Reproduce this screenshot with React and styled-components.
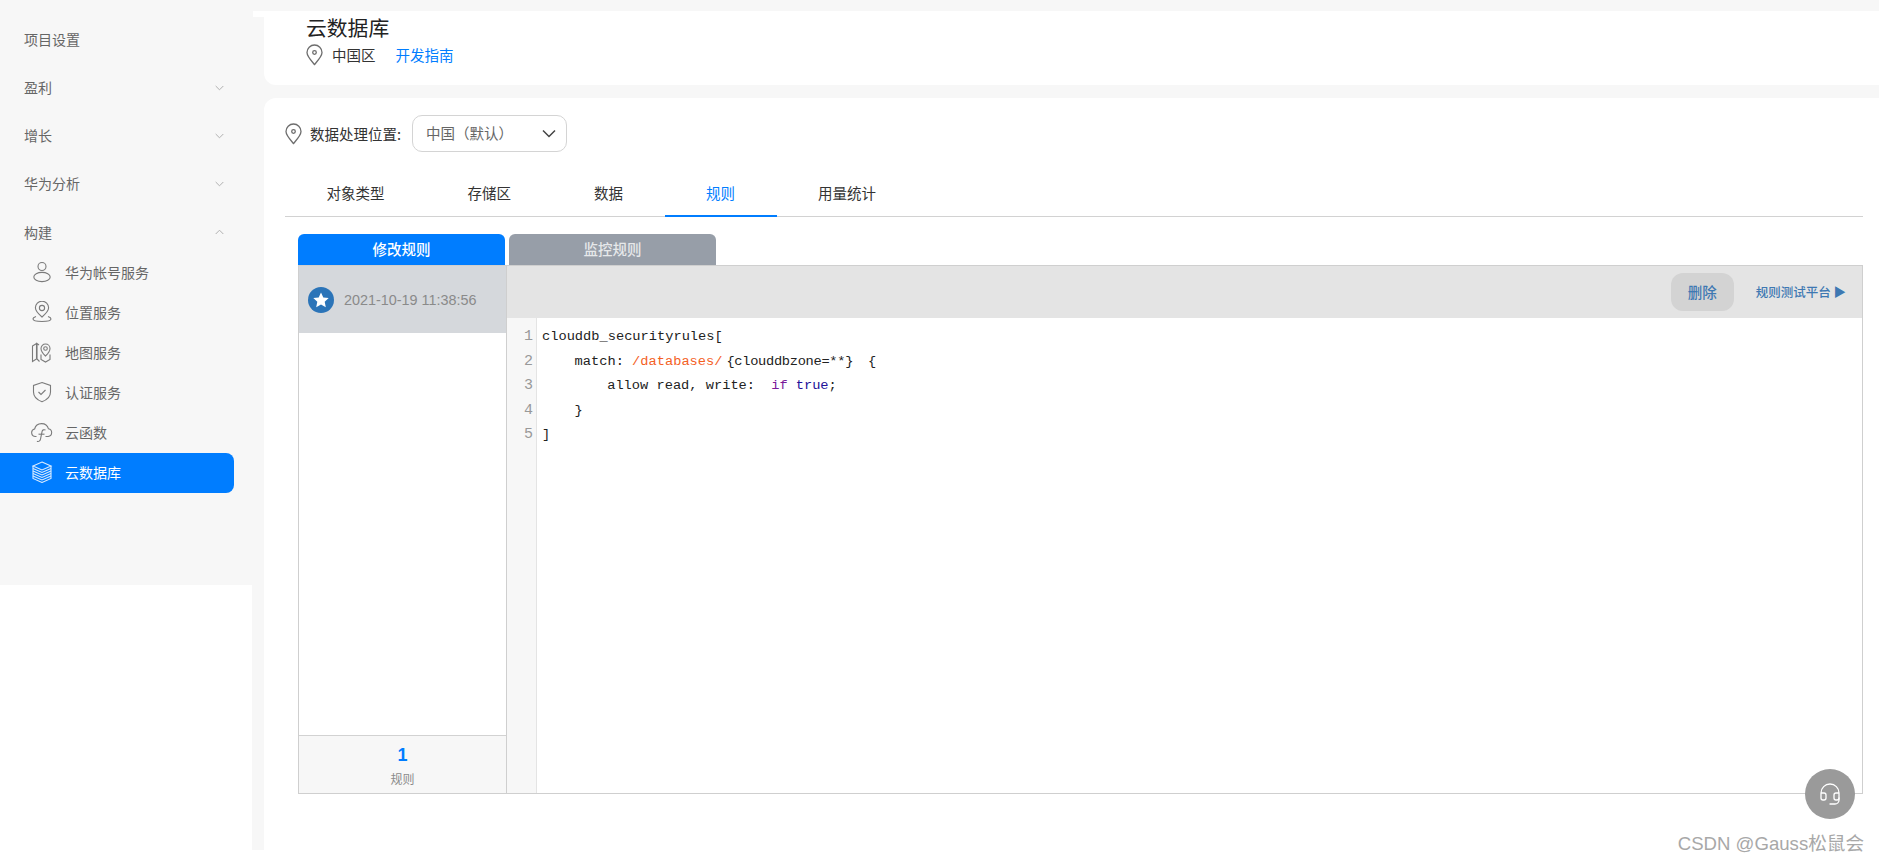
import styled, { createGlobalStyle } from "styled-components";
import { Headset } from "lucide-react";

const GlobalStyle = createGlobalStyle`
  html, body {
    margin: 0;
    background: #fff;
    font-family: "Noto Sans CJK SC", "Liberation Sans", sans-serif;
  }
`;

const Chevron = ({ up }) => (
  <svg width="9" height="6" viewBox="0 0 9 6" fill="none" stroke="#b0b0b0" strokeWidth="1">
    <path d={up ? "M.7 5 4.5 1.2 8.3 5" : "M.7 1 4.5 4.8 8.3 1"} />
  </svg>
);

const NavIcon = ({ children, width = 22 }) => (
  <svg width={width} height="22" viewBox="0 0 22 22" fill="none" stroke="currentColor" strokeWidth="1.1">
    {children}
  </svg>
);

const UserIcon = () => (
  <NavIcon>
    <circle cx="11" cy="5.5" r="4" />
    <ellipse cx="11" cy="16" rx="8.2" ry="4.6" />
  </NavIcon>
);

const LocationIcon = () => (
  <NavIcon>
    <path d="M11 16c-3-2.6-6.6-5.6-6.6-9.2a6.6 6.6 0 0 1 13.2 0c0 3.6-3.6 6.6-6.6 9.2Z" />
    <circle cx="11" cy="7" r="2.6" />
    <path d="M5 15.4c-2 .7-3 1.6-3 2.6 0 1.4 4 2.5 9 2.5s9-1.1 9-2.5c0-1-1-1.9-3-2.6" />
  </NavIcon>
);

const MapIcon = () => (
  <NavIcon>
    <path d="M1.5 5 5.5 2.5V18L1.5 20.5Z" />
    <path d="M8 4 6 2.5V18l2.5 2.5" />
    <path d="M14.5 15c-2.2-2-4.5-4.2-4.5-7.5a4.5 4.5 0 0 1 9 0c0 3.3-2.3 5.5-4.5 7.5Z" />
    <circle cx="14.5" cy="7.5" r="1.8" />
    <path d="M10 13.5v5l4.5 2.5 4.5-2.5v-5" />
  </NavIcon>
);

const ShieldIcon = () => (
  <NavIcon>
    <path d="M11 1.5 19.5 4.5V11c0 4.8-3.8 8-8.5 9.7C6.3 19 2.5 15.800 2.5 11V4.5Z" />
    <path d="m7.5 11 2.5 2.5 4.5-4.500" />
  </NavIcon>
);

const CloudFnIcon = () => (
  <NavIcon>
    <path d="M5.5 15.500H4.500A3.800 3.800 0 0 1 3.600 8a7.200 7.200 0 0 1 13.900-.2A3.900 3.900 0 0 1 17.200 15.500H14.500" />
    <path d="M14.500 9c-1.700-.7-3.100-.1-3.400 1.400L9.500 18.200c-.4 1.800-1.900 2.700-3.600 2" />
    <path d="M7.500 13.200h6" />
  </NavIcon>
);

const DatabaseIcon = () => (
  <NavIcon>
    <path d="M11 1 20 5 11 9 2 5Z" />
    <path d="M2 7.500 11 11.500 20 7.500" />
    <path d="M2 10 11 14 20 10" />
    <path d="M2 12.500 11 16.500 20 12.500" />
    <path d="M2 15 11 19 20 15" />
    <path d="M2 5v12.500L11 21.500 20 17.500V5" />
  </NavIcon>
);

const PinIcon = () => (
  <svg width="17" height="22" viewBox="0.5 0 17 22" fill="none" stroke="#6d6d6d" strokeWidth="1.3">
    <path d="M9 20.500C5 15.800 1.500 12.200 1.500 8.500a7.500 7.500 0 0 1 15 0c0 3.700-3.500 7.300-7.500 12Z" />
    <circle cx="9" cy="8.500" r="1.800" />
  </svg>
);

const StarBadge = () => (
  <svg width="26" height="26" viewBox="0 0 26 26">
    <circle cx="13" cy="13" r="13" fill="#2b74b8" />
    <path fill="#fff" d="m13 5.500 2.300 5 5.400.6-4 3.700 1.100 5.400-4.800-2.700-4.800 2.700 1.100-5.400-4-3.700 5.400-.6Z" />
  </svg>
);

const groups = ["项目设置", "盈利", "增长", "华为分析"];
const services = [
  { name: "华为帐号服务", Icon: UserIcon },
  { name: "位置服务", Icon: LocationIcon },
  { name: "地图服务", Icon: MapIcon },
  { name: "认证服务", Icon: ShieldIcon },
  { name: "云函数", Icon: CloudFnIcon },
  { name: "云数据库", Icon: DatabaseIcon, active: true },
];
const tabs = ["对象类型", "存储区", "数据", "规则", "用量统计"];

export default function App() {
  return (
    <Page>
      <GlobalStyle />
      <Sidebar>
        {groups.map((name, i) => (
          <GroupRow key={name}>
            <GroupLabel>{name}</GroupLabel>
            {i > 0 && <Chevron />}
          </GroupRow>
        ))}
        <GroupRow $open>
          <GroupLabel $open>构建</GroupLabel>
          <Chevron up />
        </GroupRow>
        <ServiceList>
          {services.map(({ name, Icon, active }) => (
            <ServiceRow key={name} $active={active}>
              <ServiceIcon>
                <Icon />
              </ServiceIcon>
              {name}
            </ServiceRow>
          ))}
        </ServiceList>
      </Sidebar>

      <Main>
        <Header>
          <Title>云数据库</Title>
          <RegionRow>
            <PinIcon />
            <RegionName>中国区</RegionName>
            <GuideLink>开发指南</GuideLink>
          </RegionRow>
        </Header>

        <Content>
          <LocationRow>
            <PinIcon />
            <LocationLabel>数据处理位置:</LocationLabel>
            <Select>
              <SelectValue>中国（默认）</SelectValue>
              <svg width="14" height="9" viewBox="0 0 14 9" fill="none" stroke="#444" strokeWidth="1.5">
                <path d="m1 1.500 6 6 6-6" />
              </svg>
            </Select>
          </LocationRow>

          <Tabs>
            {tabs.map((name) => (
              <Tab key={name} $active={name === "规则"}>
                {name}
              </Tab>
            ))}
          </Tabs>

          <RuleTabs>
            <RuleTab $active>修改规则</RuleTab>
            <RuleTab>监控规则</RuleTab>
          </RuleTabs>

          <Panel>
            <VersionList>
              <Version>
                <StarBadge />
                2021-10-19 11:38:56
              </Version>
              <Summary>
                <SummaryCount>1</SummaryCount>
                <SummaryLabel>规则</SummaryLabel>
              </Summary>
            </VersionList>

            <EditorPane>
              <Toolbar>
                <DeleteButton>删除</DeleteButton>
                <TestLink>规则测试平台 ▶</TestLink>
              </Toolbar>
              <Editor>
                <Gutter>
                  {[1, 2, 3, 4, 5].map((n) => (
                    <div key={n}>{n}</div>
                  ))}
                </Gutter>
                <Code>
                  <CodeLine>clouddb_securityrules[</CodeLine>
                  <CodeLine $indent={1}>
                    <span>match: </span>
                    <Path>/databases/</Path>
                    <Brace>{"{clouddbzone=**}"}</Brace>
                    <Brace>{"{"}</Brace>
                  </CodeLine>
                  <CodeLine $indent={2}>
                    <span>allow read, write: </span>
                    <Keyword>if</Keyword>
                    <Atom>true</Atom>
                    <span>;</span>
                  </CodeLine>
                  <CodeLine $indent={1}>{"}"}</CodeLine>
                  <CodeLine>]</CodeLine>
                </Code>
              </Editor>
            </EditorPane>
          </Panel>
        </Content>
      </Main>

      <HelpButton>
        <Headset size={24} strokeWidth={1.3} />
      </HelpButton>
      <Watermark>CSDN @Gauss松鼠会</Watermark>
    </Page>
  );
}

const Page = styled.div`
  position: relative;
  display: flex;
  align-items: flex-start;
  width: 1879px;
  height: 862px;
  overflow: hidden;
  background: #fff;
`;

const Sidebar = styled.nav`
  box-sizing: border-box;
  flex: 0 0 252px;
  height: 585px;
  padding-top: 20px;
  background: #f7f7f7;
  font-size: 14px;
  color: #666;
`;

const GroupRow = styled.div`
  display: flex;
  align-items: center;
  justify-content: space-between;
  height: 40px;
  margin-top: ${(p) => (p.$open ? "1px" : "0")};
  margin-bottom: ${(p) => (p.$open ? "0" : "8px")};
  padding: 0 28px 0 24px;
`;

const GroupLabel = styled.span`
  margin-top: ${(p) => (p.$open ? "0" : "-2px")};
`;

const ServiceList = styled.div`
  margin-top: 1px;
`;

const ServiceRow = styled.div`
  display: flex;
  align-items: center;
  width: 234px;
  height: 40px;
  padding: 0 0 2px 31px;
  box-sizing: border-box;
  border-radius: 0 8px 8px 0;
  background: ${(p) => (p.$active ? "#007dff" : "transparent")};
  color: ${(p) => (p.$active ? "#fff" : "#666")};
`;

const ServiceIcon = styled.span`
  display: flex;
  width: 34px;
  opacity: 0.85;
`;

const Main = styled.main`
  box-sizing: border-box;
  display: flex;
  flex-direction: column;
  gap: 13px;
  width: 1627px;
  height: 850px;
  padding: 11px 0 0 12px;
  background: #f7f7f7;
`;

const Header = styled.header`
  position: relative;
  box-sizing: border-box;
  height: 74px;
  padding-left: 42px;
  background: #fff;
  border-radius: 0 0 0 12px;

  &::before {
    content: "";
    position: absolute;
    top: 0;
    left: -11px;
    width: 11px;
    height: 6px;
    background: #fff;
  }
`;

const Title = styled.div`
  height: 33px;
  font-size: 20.8px;
  line-height: 33px;
  color: #222;
`;

const RegionRow = styled.div`
  display: flex;
  align-items: center;
  height: 21px;
  font-size: 14.5px;
  color: #333;
`;

const RegionName = styled.span`
  margin-left: 9px;
`;

const GuideLink = styled.a`
  margin-left: 20px;
  color: #007dff;
`;

const Content = styled.section`
  flex: 1;
  box-sizing: border-box;
  padding: 17px 16px 0 21px;
  background: #fff;
  border-radius: 12px 0 0 0;
`;

const LocationRow = styled.div`
  display: flex;
  align-items: center;
  height: 37px;
  font-size: 14.5px;
  color: #333;
`;

const LocationLabel = styled.span`
  margin: -1px 11px 0 8px;
`;

const Select = styled.div`
  box-sizing: border-box;
  display: flex;
  align-items: center;
  justify-content: space-between;
  width: 155px;
  height: 37px;
  padding: 0 10px 0 13px;
  border: 1px solid #d4d4d4;
  border-radius: 10px;
  color: #666;
`;

const SelectValue = styled.span`
  margin-top: -3px;
`;

const Tabs = styled.div`
  display: flex;
  height: 47px;
  margin-top: 18px;
  border-bottom: 1px solid #d2d2d2;
  box-sizing: border-box;
`;

const Tab = styled.div`
  display: flex;
  align-items: center;
  height: 47px;
  padding: 0 41.5px;
  box-sizing: border-box;
  font-size: 14.5px;
  color: ${(p) => (p.$active ? "#007dff" : "#333")};
  border-bottom: 2px solid ${(p) => (p.$active ? "#007dff" : "transparent")};
`;

const RuleTabs = styled.div`
  display: flex;
  gap: 4px;
  margin: 17px 0 0 13px;
`;

const RuleTab = styled.div`
  box-sizing: border-box;
  display: flex;
  align-items: center;
  justify-content: center;
  width: 207px;
  height: 31px;
  padding-bottom: 2px;
  border-radius: 6px 6px 0 0;
  font-size: 14.5px;
  font-weight: 500;
  color: ${(p) => (p.$active ? "#fff" : "#e6e8ea")};
  background: ${(p) => (p.$active ? "#007dff" : "#979ea8")};
`;

const Panel = styled.div`
  box-sizing: border-box;
  display: flex;
  height: 529px;
  margin-left: 13px;
  border: 1px solid #cfcfcf;
`;

const VersionList = styled.div`
  display: flex;
  flex-direction: column;
  justify-content: space-between;
  width: 207px;
  border-right: 1px solid #cfcfcf;
`;

const Version = styled.div`
  display: flex;
  align-items: center;
  gap: 10px;
  height: 67px;
  padding-left: 9px;
  background: #d5d8dc;
  font-family: "Liberation Sans", sans-serif;
  font-size: 14.4px;
  color: #8a8a8a;
`;

const Summary = styled.div`
  box-sizing: border-box;
  display: flex;
  flex-direction: column;
  align-items: center;
  height: 58px;
  padding-top: 7px;
  border-top: 1px solid #d2d2d2;
  background: #f7f7f7;
`;

const SummaryCount = styled.div`
  font-family: "Liberation Sans", sans-serif;
  font-size: 18px;
  font-weight: 700;
  line-height: 24px;
  color: #007dff;
`;

const SummaryLabel = styled.div`
  margin-top: 3px;
  font-size: 12px;
  line-height: 18px;
  color: #8a8a8a;
`;

const EditorPane = styled.div`
  flex: 1;
  display: flex;
  flex-direction: column;
`;

const Toolbar = styled.div`
  display: flex;
  align-items: center;
  justify-content: flex-end;
  height: 52px;
  padding-right: 16px;
  background: #e4e4e4;
  color: #3e78b2;
  font-weight: 500;
`;

const DeleteButton = styled.div`
  display: flex;
  align-items: center;
  justify-content: center;
  width: 63px;
  height: 38px;
  padding-bottom: 2px;
  box-sizing: border-box;
  border-radius: 12px;
  background: #d3d3d3;
  font-size: 14.5px;
`;

const TestLink = styled.div`
  margin: -2px 0 0 22px;
  font-size: 12.5px;
`;

const Editor = styled.div`
  flex: 1;
  display: flex;
  font-family: "Liberation Mono", monospace;
  font-size: 13.7px;
  line-height: 24.6px;
`;

const Gutter = styled.div`
  box-sizing: border-box;
  width: 30px;
  padding: 7px 3px 0 0;
  background: #f7f7f7;
  border-right: 1px solid #e4e4e4;
  color: #999;
  font-size: 15px;
  text-align: right;
`;

const Code = styled.div`
  padding: 7px 0 0 5px;
  color: #222;
`;

const CodeLine = styled.div`
  display: flex;
  height: 24.6px;
  padding-left: ${(p) => (p.$indent || 0) * 32.6}px;
  white-space: pre;
`;

const Path = styled.span`
  color: #f4611f;
`;

const Brace = styled.span`
  margin-left: 4px;
  letter-spacing: -0.3px;

  & + & {
    margin-left: 15px;
  }
`;

const Keyword = styled.span`
  margin-left: 8px;
  color: #7a1a9a;
`;

const Atom = styled.span`
  margin-left: 8px;
  color: #221199;
`;

const HelpButton = styled.div`
  position: absolute;
  left: 1805px;
  top: 769px;
  display: flex;
  align-items: center;
  justify-content: center;
  width: 50px;
  height: 50px;
  border-radius: 50%;
  background: #9a9a9a;
  color: #fff;
`;

const Watermark = styled.div`
  position: absolute;
  right: 15px;
  top: 831px;
  font-family: "Liberation Sans", "Noto Sans CJK SC", sans-serif;
  font-size: 18.6px;
  line-height: 26px;
  color: #a8a8a8;
`;
